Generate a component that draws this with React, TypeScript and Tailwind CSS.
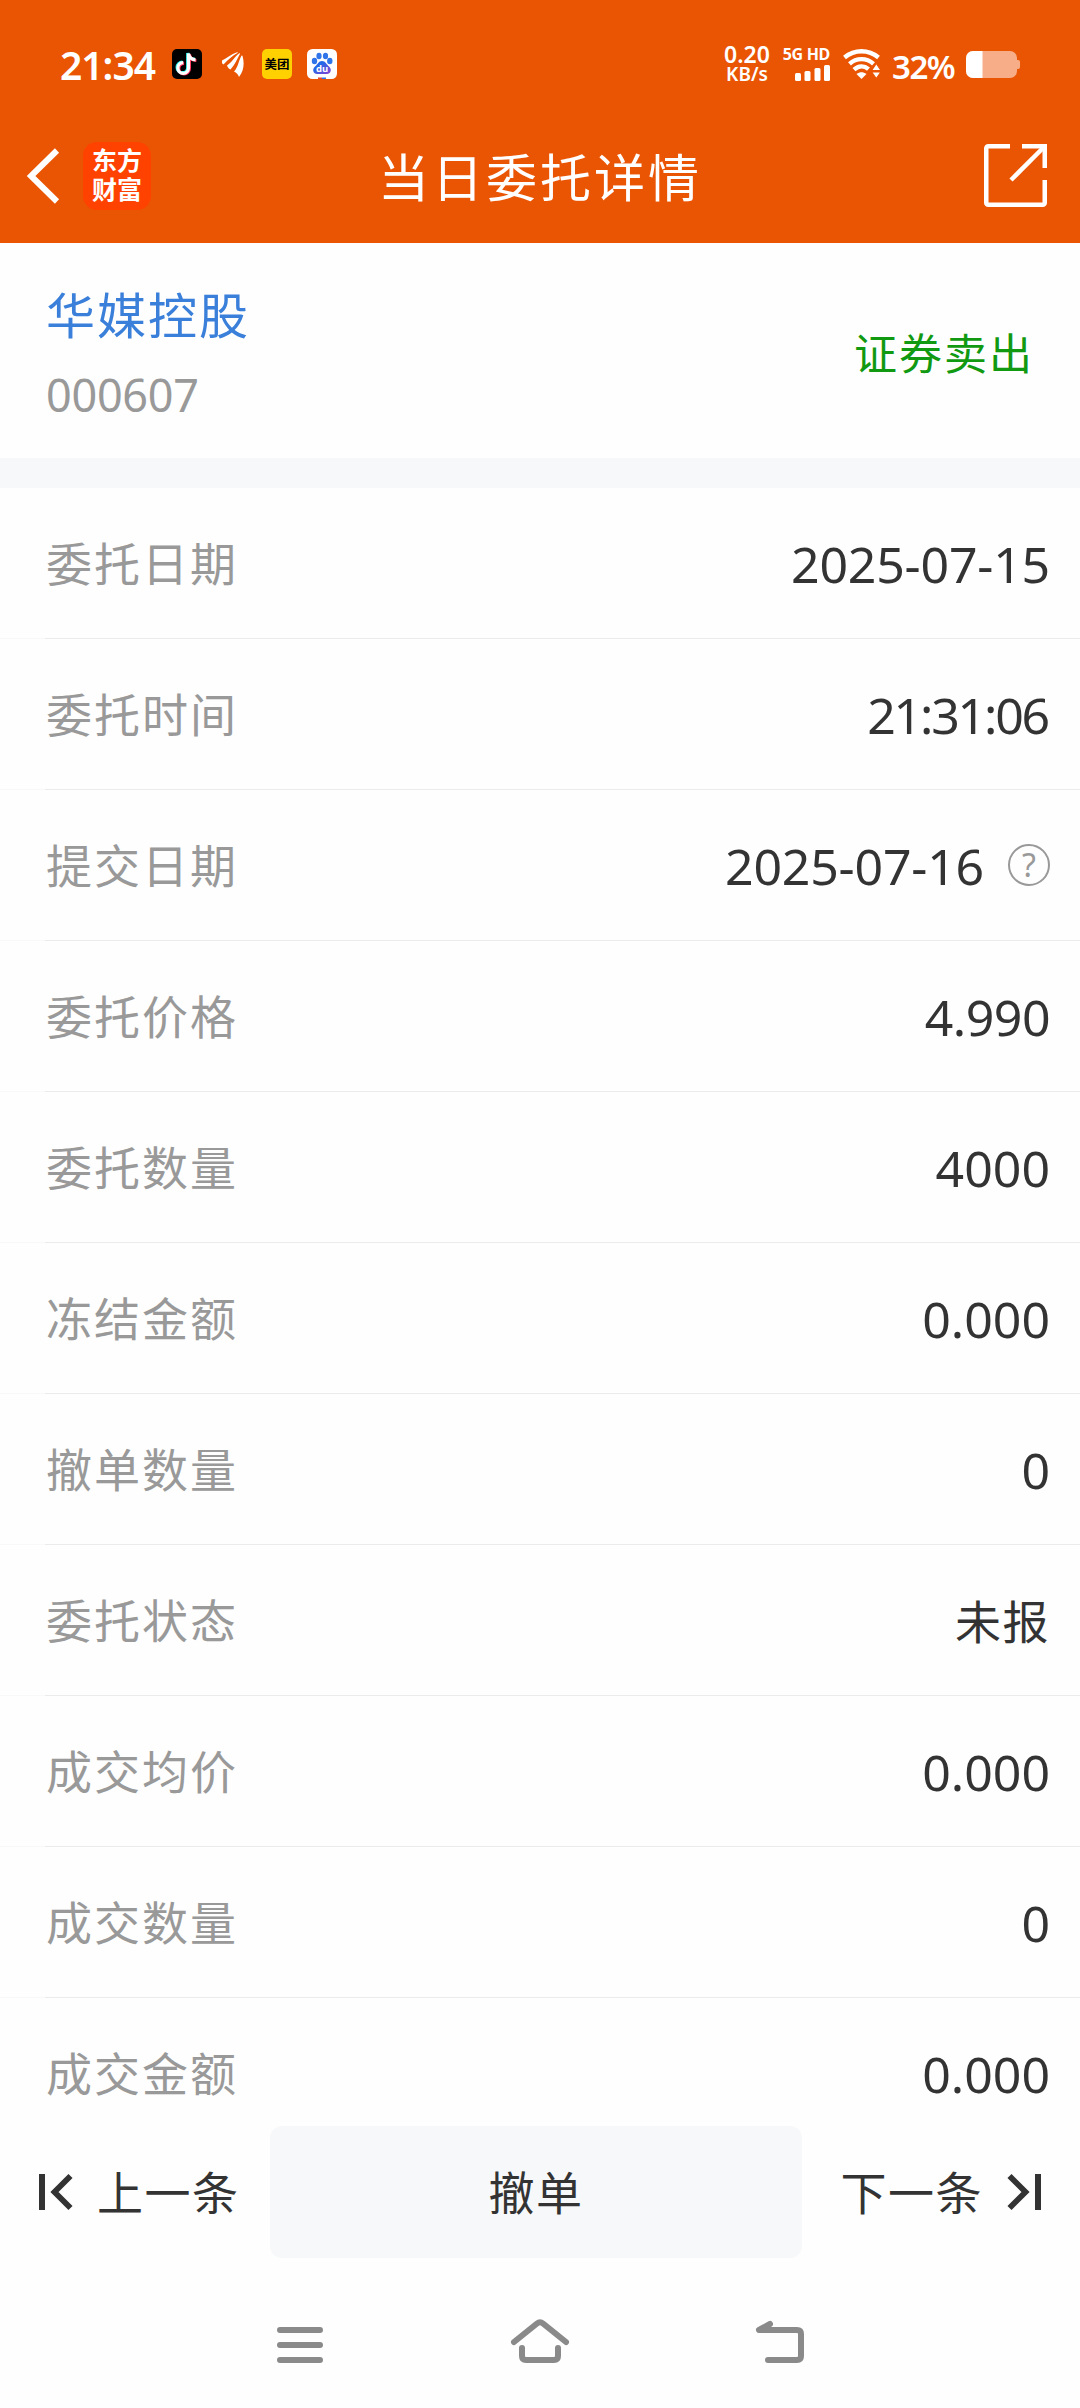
import type { ReactNode } from 'react';

// ── Types ──────────────────────────────────────────────────────────────────

type DetailRow = {
  label: string;
  value: string;
  valueClass?: string;
  help?: boolean;
};

// ── Data ───────────────────────────────────────────────────────────────────

const ROWS: DetailRow[] = [
  { label: '委托日期', value: '2025-07-15', valueClass: 'text-[50px] tracking-[-0.2px]' },
  { label: '委托时间', value: '21:31:06', valueClass: 'mr-[2px] text-[50px] tracking-[-2.2px]' },
  { label: '提交日期', value: '2025-07-16', valueClass: 'text-[50px] tracking-[-0.2px]', help: true },
  { label: '委托价格', value: '4.990', valueClass: 'text-[50px] tracking-[-0.5px]' },
  { label: '委托数量', value: '4000' },
  { label: '冻结金额', value: '0.000' },
  { label: '撤单数量', value: '0' },
  { label: '委托状态', value: '未报', valueClass: 'text-[46px] tracking-[1.5px]' },
  { label: '成交均价', value: '0.000' },
  { label: '成交数量', value: '0' },
  { label: '成交金额', value: '0.000' },
];

// ── Icons ──────────────────────────────────────────────────────────────────

function DouyinIcon() {
  const note = 'M16.5 4.500v14.500a5.300 5.300 0 1 1-5.300-5.300M16.500 4.500c.4 3.400 2.800 6 7 6.300';
  return (
    <svg width="30" height="30" viewBox="0 0 30 30" fill="none" strokeWidth="3.200" aria-hidden="true">
      <rect width="30" height="30" rx="5" fill="#000" />
      <path d={note} stroke="#25F4EE" transform="translate(-.8 -.6)" />
      <path d={note} stroke="#FE2C55" transform="translate(.9 .7)" />
      <path d={note} stroke="#fff" />
    </svg>
  );
}

function WingIcon() {
  return (
    <svg width="22" height="25" viewBox="0 0 22 25" fill="#fff" aria-hidden="true">
      <path d="M0 8.500C5 6 9 2 15 .2c.8-.2 1 .5.400.9C10.500 3.500 6 8 1.500 12.500 0 11.500-.5 10.500 0 8.500Z" />
      <path d="M5 13.500C10.500 10 12.500 4.500 17 1.500c.9-.5 1.300.1.800.8C15 7 13 13 8.500 17.500 6.500 16.500 5.500 15 5 13.500Z" />
      <path d="M12 19.500C16 15.500 16.500 9 19.300 4c.5-.8 1.200-.6 1.300.3C22.500 11 22 19 17 25c-.8-2.500-2.500-4.500-5-5.500Z" />
    </svg>
  );
}

function BaiduIcon() {
  return (
    <svg width="30" height="30" viewBox="0 0 30 30" aria-hidden="true">
      <defs>
        <linearGradient id="paw" x1="0" y1="0" x2="1" y2="1">
          <stop offset=".35" stopColor="#2468e8" />
          <stop offset="1" stopColor="#8a3fd0" />
        </linearGradient>
      </defs>
      <rect width="30" height="30" rx="5.500" fill="#fff" />
      <ellipse cx="7.500" cy="12" rx="2.700" ry="3.300" fill="#2f74e8" />
      <ellipse cx="12" cy="7" rx="2.600" ry="3.300" fill="#2f74e8" />
      <ellipse cx="18.500" cy="7" rx="2.600" ry="3.300" fill="#2f74e8" />
      <ellipse cx="22.800" cy="12" rx="2.700" ry="3.300" fill="#2f74e8" />
      <path d="M15 12c3.500 0 4.500 3.500 7 5.500 3.500 3 1.500 7.800-2.500 7.500h-9C6.500 25.300 4.500 20.500 8 17.500c2.500-2 3.500-5.500 7-5.500Z" fill="url(#paw)" />
      <rect x="11" y="28.500" width="4" height="1.500" fill="#e0433a" />
      <rect x="15" y="28.500" width="4" height="1.500" fill="#2f74e8" />
      <text x="15.200" y="23.300" textAnchor="middle" fontSize="9.500" fontWeight="700" fill="#fff">du</text>
    </svg>
  );
}

function SignalIcon() {
  return (
    <svg width="35" height="16" viewBox="0 0 35 16" fill="#fff" aria-hidden="true">
      <rect x="0" y="8" width="6" height="8" rx="1.500" />
      <rect x="9.500" y="6" width="6" height="10" rx="1.500" />
      <rect x="19.500" y="3" width="6" height="13" rx="1.500" />
      <rect x="29" y="0" width="6" height="16" rx="1.500" />
    </svg>
  );
}

function WifiIcon() {
  return (
    <svg width="37" height="30" viewBox="0 0 37 30" fill="none" stroke="#fff" strokeWidth="4.400" aria-hidden="true">
      <path d="M1.500 8.500c10-8.300 24-8.300 34 0" />
      <path d="M6.500 14.800c7-6.200 17-6.200 24 0" />
      <path d="M11 20.700c4.600-4.200 10-4.400 14.500-.5" />
      <path d="M13.500 25c3.300-2.300 6.700-2.300 10 0l-5 5Z" fill="#fff" stroke="none" />
      <path d="M33.300 14.500 38 21.500h-9.400ZM33.300 29.500 38 23h-9.400Z" fill="#fff" stroke="#EA5504" strokeWidth="1.200" />
    </svg>
  );
}

function BatteryIcon() {
  return (
    <svg width="54" height="27" viewBox="0 0 54 27" aria-hidden="true">
      <rect width="51" height="27" rx="7" fill="#F7AD88" />
      <path d="M51 9h1a2 2 0 0 1 2 2v5a2 2 0 0 1-2 2h-1Z" fill="#F7AD88" />
      <path d="M7 0h9.500v27H7a7 7 0 0 1-7-7V7a7 7 0 0 1 7-7Z" fill="#fff" />
    </svg>
  );
}

function BackIcon() {
  return (
    <svg width="33" height="56" viewBox="0 0 33 56" fill="none" stroke="#fff" strokeWidth="6" aria-hidden="true">
      <path d="M30 2.500 4 28l26 25.500" />
    </svg>
  );
}

function ShareIcon() {
  return (
    <svg width="63" height="63" viewBox="0 0 63 63" fill="none" stroke="#fff" strokeWidth="4.500" aria-hidden="true">
      <path d="M26 2.250H4.250a2 2 0 0 0-2 2v54.500a2 2 0 0 0 2 2h54.500a2 2 0 0 0 2-2V36" />
      <path d="M38 2.250h22.750V24" />
      <path d="M27 36 60 3" />
    </svg>
  );
}

function SkipIcon({ flip = false }: { flip?: boolean }) {
  return (
    <svg width="34" height="38" viewBox="0 0 34 38" fill="none" stroke="#333" strokeWidth="6"
      className={flip ? '-scale-x-100' : ''} aria-hidden="true">
      <path d="M3 1v36" />
      <path d="M31.500 3 15.500 19l16 16" strokeWidth="5.800" />
    </svg>
  );
}

function NavIcon({ children }: { children: ReactNode }) {
  return (
    <svg width="60" height="48" viewBox="0 0 60 48" fill="none" stroke="#8A8A8A" strokeWidth="6"
      strokeLinecap="round" strokeLinejoin="round" aria-hidden="true">
      {children}
    </svg>
  );
}

// ── Status bar ─────────────────────────────────────────────────────────────

function StatusBar() {
  return (
    <div className="flex h-32 items-center px-[60px] font-['Noto_Sans'] text-white">
      <span className="w-[112px] text-[39px] font-semibold leading-none tracking-[-1px]">21:34</span>
      <DouyinIcon />
      <span className="ml-5 flex"><WingIcon /></span>
      <span className="ml-[18px] flex size-[30px] items-center justify-center rounded-[5px] bg-[#FFD100] font-['Noto_Sans_CJK_SC'] text-[12.5px] font-bold text-black">
        美团
      </span>
      <span className="ml-[15px] flex"><BaiduIcon /></span>

      <div className="ml-auto flex items-center">
        <div className="mr-[8px] flex w-[54px] flex-col items-center whitespace-nowrap font-semibold">
          <span className="h-5 text-[23px] leading-5">0.20</span>
          <span className="h-5 text-[19px] leading-5">KB/s</span>
        </div>
        <div className="flex w-[48px] flex-col items-end gap-1">
          <span className="whitespace-nowrap text-[16px] font-bold leading-[13px] tracking-[-0.3px]">5G HD</span>
          <SignalIcon />
        </div>
        <span className="ml-[13px] flex"><WifiIcon /></span>
        <span className="ml-3 w-[64px] pt-1 text-[33px] font-semibold leading-none tracking-[-1.5px]">32%</span>
        <span className="ml-[10px] flex"><BatteryIcon /></span>
      </div>
    </div>
  );
}

// ── Title bar ──────────────────────────────────────────────────────────────

function TitleBar() {
  return (
    <div className="flex h-[95px] items-center justify-between pl-[27px] pr-[33px]">
      <div className="flex w-[200px] items-center gap-[23px]">
        <BackIcon />
        <div className="flex size-[68px] flex-col items-center justify-center rounded-[14px] bg-[#FF4200] pb-0.5 text-[25px] font-bold leading-[29px] text-white">
          <span>东方</span>
          <span>财富</span>
        </div>
      </div>
      <h1 className="pl-[6px] pt-1 text-[51px] leading-none tracking-[3px] text-white">当日委托详情</h1>
      <div className="flex w-[200px] justify-end">
        <ShareIcon />
      </div>
    </div>
  );
}

// ── Detail rows ────────────────────────────────────────────────────────────

function Row({ row }: { row: DetailRow }) {
  return (
    <div className="h-[151px] shrink-0">
      <div className="flex h-[150px] items-center justify-between pl-[46px] pr-[30px]">
        <span className="text-[46px] leading-none tracking-[2px] text-[#999]">{row.label}</span>
        <div className="flex items-center">
          <span className={`pt-0.5 leading-none text-[#333] ${row.valueClass ?? 'text-[50px]'}`}>
            {row.value}
          </span>
          {row.help && (
            <span className="ml-6 flex size-[42px] items-center justify-center rounded-full border-2 border-[#999] text-[32px] leading-none text-[#999]">
              ?
            </span>
          )}
        </div>
      </div>
      <div className="flex h-px">
        <div className="w-[45px] bg-[#F8F8F8]" />
        <div className="flex-1 bg-[#EBEBEB]" />
      </div>
    </div>
  );
}

// ── Page ───────────────────────────────────────────────────────────────────

export default function App() {
  return (
    <div className="flex h-[2408px] w-[1080px] flex-col overflow-hidden bg-[#FEFEFE] font-['Noto_Sans','Noto_Sans_CJK_SC',sans-serif]">
      <header className="h-[243px] shrink-0 bg-[#EA5504]">
        <StatusBar />
        <TitleBar />
      </header>

      <section className="flex h-[215px] shrink-0 items-center justify-between px-[46px] pt-[5px]">
        <div className="flex flex-col gap-[29px]">
          <span className="text-[49px] leading-[54px] tracking-[2px] text-[#3A7FD9]">华媒控股</span>
          <span className="text-[45px] leading-[48px] tracking-[-0.3px] text-[#999]">000607</span>
        </div>
        <span className="text-[43px] leading-none tracking-[2px] text-[#119911]">证券卖出</span>
      </section>

      <div className="h-[30px] shrink-0 bg-[#F7F8FA]" />

      <main className="flex min-h-0 flex-1 flex-col overflow-hidden">
        {ROWS.map((row) => (
          <Row key={row.label} row={row} />
        ))}
      </main>

      <footer className="flex h-[132px] shrink-0 items-center text-[46px] leading-none tracking-[1.500px] text-[#333]">
        <button className="flex w-[270px] items-center gap-6 pl-[39px]">
          <SkipIcon />
          上一条
        </button>
        <button className="h-full w-[532px] rounded-[12px] bg-[#F7F8FA]">撤单</button>
        <button className="flex flex-1 items-center justify-end gap-6 pr-[39px]">
          下一条
          <SkipIcon flip />
        </button>
      </footer>

      <nav className="flex h-[150px] shrink-0 items-start justify-center gap-[180px] pt-[60px]">
        <NavIcon>
          <path d="M10 12h40M10 27h40M10 42h40" />
        </NavIcon>
        <NavIcon>
          <path d="M4 24 27 5.500q3-2.500 6 0L56 24M12 30v8q0 4 4 4h28q4 0 4-4v-8" />
        </NavIcon>
        <NavIcon>
          <path d="M20 6 9 12h38q4 0 4 4v22q0 4-4 4H18" />
        </NavIcon>
      </nav>
    </div>
  );
}
